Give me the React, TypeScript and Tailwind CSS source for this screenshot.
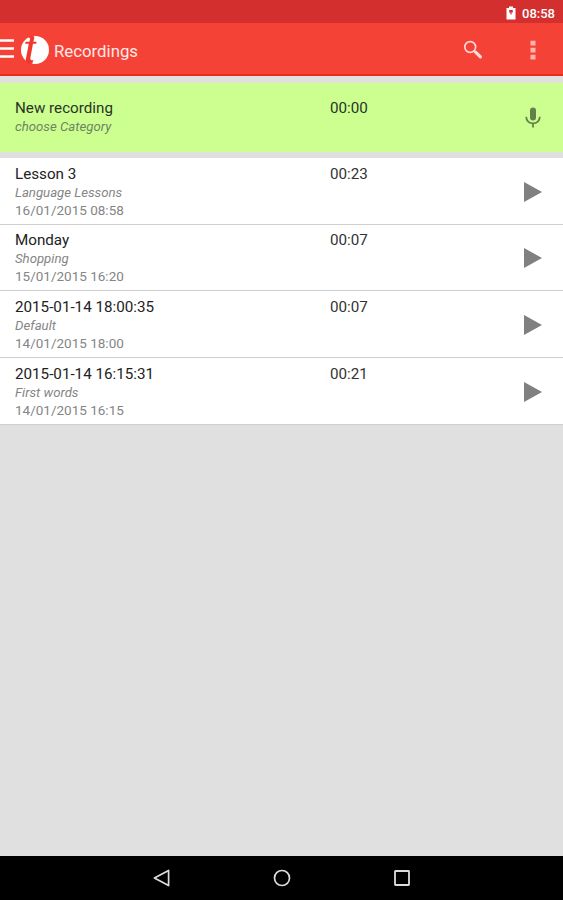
import React from 'react'

type Recording = {
    title: string;
    category: string;
    date: string;
    length: string;
}

const recordings: Recording[] = [
    { title: 'Lesson 3', category: 'Language Lessons', date: '16/01/2015 08:58', length: '00:23' },
    { title: 'Monday', category: 'Shopping', date: '15/01/2015 16:20', length: '00:07' },
    { title: '2015-01-14 18:00:35', category: 'Default', date: '14/01/2015 18:00', length: '00:07' },
    { title: '2015-01-14 16:15:31', category: 'First words', date: '14/01/2015 16:15', length: '00:21' },
]

const App = () => {
    return (
        <div className="flex h-[900px] w-full flex-col overflow-hidden bg-[#e0e0e0] font-[Roboto,sans-serif]">
            <StatusBar />
            <AppBar />
            <main className="flex-1 pt-[7px]">
                <NewRecording />
                <ul className="mt-[6px]">
                    {recordings.map((rec) => (
                        <RecordingRow key={rec.date} {...rec} />
                    ))}
                </ul>
            </main>
            <NavBar />
        </div>
    )
}

const StatusBar = () => (
    <div className="flex h-[23px] items-center justify-end bg-[#d32f2f] pt-[3px] pr-[8px]">
        <svg width="10" height="14" viewBox="0 0 10 14" className="mr-[6px]">
            <path d="M3 .5h4v1.5h2.5v11.5h-9V2H3z" fill="#fff" />
            <path d="M3.2 4h3.6v2.6H5.6v2H4.4v-2H3.2z" fill="#d32f2f" />
        </svg>
        <span className="text-[13px] leading-none font-medium text-white">08:58</span>
    </div>
)

const AppBar = () => (
    <header className="flex h-[53px] items-center border-b-2 border-[#ee2a16] bg-[#f44336] pt-[3px]">
        <svg width="14" height="22" viewBox="0 0 14 22" className="-mt-[2px]">
            <path d="M0 2.5h14M0 10.5h14M0 18.5h14" stroke="#fff" strokeWidth="2.6" />
        </svg>
        <Logo />
        <h1 className="mt-[3px] ml-[4px] text-[16.8px] text-[#ffe9e7]">Recordings</h1>
        <svg width="20" height="20" viewBox="0 0 20 20" className="ml-auto">
            <circle cx="7.2" cy="7" r="5.4" fill="none" stroke="#ffdcd8" strokeWidth="1.6" />
            <path d="M11 11l1.5 1.2" stroke="#ffdcd8" strokeWidth="1.6" />
            <path d="M12.6 12.2l4.8 4.6" stroke="#ffdcd8" strokeWidth="3.2" strokeLinecap="round" />
        </svg>
        <svg width="6" height="20" viewBox="0 0 6 20" className="mr-[27px] ml-[47px]">
            <path d="M.5.8h5v4.6h-5zM.5 7.8h5v4.6h-5zM.5 14.8h5v4.6h-5z" fill="#fbb4ae" />
        </svg>
    </header>
)

// White disc with a slanted serif "t" cut through it
const Logo = () => (
    <svg width="30" height="30" viewBox="0 0 30 30" className="ml-[6px]">
        <circle cx="15" cy="15" r="14" fill="#fff" />
        <path
            d="M8.6 1.8C10.8.2 14 .4 14.4 2.4L13.4 6.8H16.6L16.2 8.8H13L10.4 22.5C10 25 11 25.8 13.4 25L12.2 28.8C8.4 29.4 5.2 27.6 5.8 24.2L8.8 8.8H5.2L5.6 6.8H9.4L10.2 3.8z"
            fill="#f0392c"
        />
    </svg>
)

const NewRecording = () => (
    <div className="flex h-[69px] bg-[#ccff90] pl-[15px]">
        <div className="w-[315px] pt-[16px]">
            <p className="text-[15.2px] leading-[19px] text-[#2a3324]">New recording</p>
            <p className="text-[13.2px] leading-[18px] text-[#6f8560] italic">choose Category</p>
        </div>
        <p className="pt-[16px] text-[15.2px] leading-[19px] text-[#2a3324]">00:00</p>
        <svg width="16" height="22" viewBox="0 0 16 22" className="mt-[24px] mr-[22px] ml-auto">
            <rect x="5" y="0.4" width="6" height="13" rx="3" fill="#66804a" />
            <path d="M1.2 9.8c0 3.9 3 6.6 6.8 6.6s6.8-2.7 6.8-6.6M8 16.4v4" fill="none" stroke="#66804a" strokeWidth="1.8" />
        </svg>
    </div>
)

const RecordingRow = ({ title, category, date, length }: Recording) => (
    <li className="flex h-[66.7px] border-b border-[#cfcfcf] bg-white pl-[15px]">
        <div className="w-[315px] pt-[6.5px]">
            <p className="text-[15.2px] leading-[19px] text-[#222]">{title}</p>
            <p className="text-[13.2px] leading-[18px] text-[#858585] italic">{category}</p>
            <p className="text-[13.5px] leading-[17px] text-[#858585]">{date}</p>
        </div>
        <p className="pt-[6.5px] text-[15.2px] leading-[19px] text-[#333]">{length}</p>
        <svg width="18" height="20" viewBox="0 0 18 20" className="mt-[23.5px] mr-[21px] ml-auto">
            <path d="M0 0l18 10L0 20z" fill="#808080" />
        </svg>
    </li>
)

const NavBar = () => (
    <nav className="flex h-[44px] items-center bg-black pl-[153px]">
        <svg width="18" height="18" viewBox="0 0 18 18" fill="none" stroke="#dcdcdc" strokeWidth="1.7" strokeLinejoin="round">
            <path d="M15.6 1.4v15.2L1.4 9z" />
        </svg>
        <svg width="18" height="18" viewBox="0 0 18 18" className="ml-[102px]" fill="none" stroke="#dcdcdc" strokeWidth="1.7">
            <circle cx="9" cy="9" r="7.5" />
        </svg>
        <svg width="18" height="18" viewBox="0 0 18 18" className="ml-[102px]" fill="none" stroke="#dcdcdc" strokeWidth="1.8">
            <rect x="2" y="2" width="14" height="14" rx=".5" />
        </svg>
    </nav>
)

export default App
